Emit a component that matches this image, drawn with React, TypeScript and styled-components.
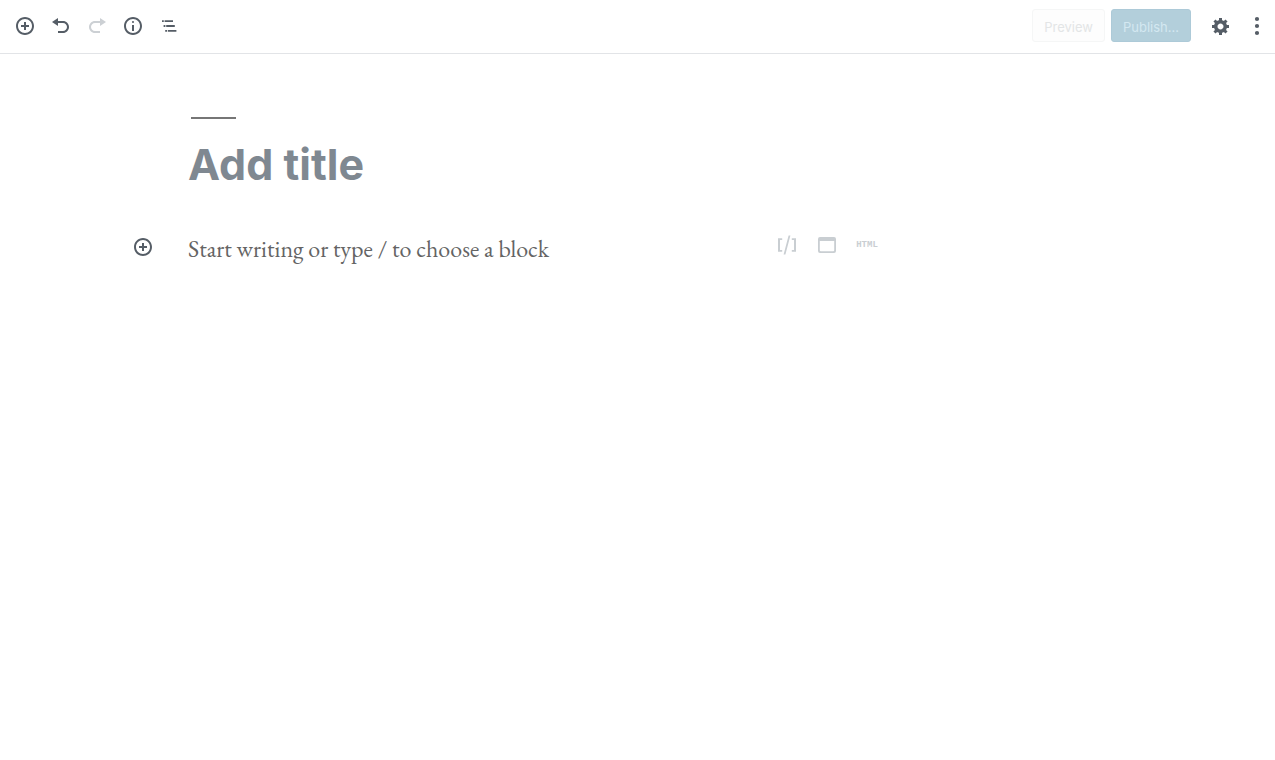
import React from 'react';
import styled, { createGlobalStyle } from 'styled-components';

const GlobalStyle = createGlobalStyle`
  *, *::before, *::after { box-sizing: border-box; }
  body { margin: 0; background: #fff; font-family: Inter, "Liberation Sans", sans-serif; }
  button, input { font: inherit; }
`;

const Toolbar = styled.header`
  display: flex;
  align-items: center;
  justify-content: space-between;
  height: 54px;
  padding: 0 0 2px 7px;
  border-bottom: 1px solid #e2e4e7;
`;

const ToolGroup = styled.div`
  display: flex;
  align-items: center;
`;

const IconButton = styled.button`
  display: flex;
  align-items: center;
  justify-content: center;
  width: 36px;
  height: 36px;
  padding: 0;
  border: 0;
  background: transparent;
  color: #555d66;
  &:disabled { color: #ccd0d4; }
`;

const ActionButton = styled.button<{ $primary?: boolean }>`
  height: 33px;
  padding: 2px 11px 0;
  margin-right: ${p => (p.$primary ? 12 : 6)}px;
  border: 1px solid ${p => (p.$primary ? '#adcad8' : '#f5f6f6')};
  border-radius: 3px;
  background: ${p => (p.$primary ? '#b3cfdb' : '#fdfdfd')};
  color: ${p => (p.$primary ? '#d3e8f1' : '#e3e5e6')};
  font-size: 13px;
  line-height: 16px;
`;

const Canvas = styled.main`
  display: grid;
  grid-template-columns: 53px minmax(0, 697px);
  padding: 63px 24px 0 135px;
`;

const TitleBlock = styled.div`
  grid-column: 2;
  &::before {
    content: '';
    display: block;
    width: 45px;
    height: 2px;
    margin-left: 3px;
    background: #767676;
  }
`;

const TitleInput = styled.input`
  display: block;
  width: 100%;
  height: 60px;
  margin-top: 15px;
  padding: 0;
  border: 0;
  outline: 0;
  background: transparent;
  color: #191e23;
  font-size: 43px;
  font-weight: 700;
  &::placeholder { color: #7f8891; opacity: 1; }
`;

const InserterButton = styled(IconButton)`
  justify-content: flex-start;
  margin-top: 35px;
  margin-left: -2px;
`;

const Paragraph = styled.div`
  display: flex;
  align-items: center;
  margin-top: 35px;
  height: 36px;
`;

const ParagraphInput = styled.input`
  flex: 1;
  min-width: 0;
  height: 36px;
  padding: 2px 0 0;
  border: 0;
  outline: 0;
  background: transparent;
  color: #111;
  font-family: "EB Garamond", "Liberation Serif", serif;
  font-size: 24px;
  &::placeholder { color: #646464; opacity: 1; }
`;

const BlockShortcuts = styled.div`
  display: flex;
  gap: 4px;
  margin-bottom: 4px;
`;

const ShortcutButton = styled(IconButton)`
  color: #c9ced2;
  font-family: "Liberation Mono", monospace;
  font-size: 9px;
  font-weight: 700;
`;

const Svg = styled.svg`
  display: block;
  width: 20px;
  height: 20px;
  fill: currentColor;
`;

const Icon = ({ d }: { d: string }) => (
  <Svg viewBox="0 0 20 20" aria-hidden="true"><path d={d} /></Svg>
);

const icons = {
  insert: 'M10 1c-5 0-9 4-9 9s4 9 9 9 9-4 9-9-4-9-9-9zm0 16c-3.9 0-7-3.1-7-7s3.1-7 7-7 7 3.1 7 7-3.1 7-7 7zm1-11H9v3H6v2h3v3h2v-3h3V9h-3V6z',
  undo: 'M12 5H7V2L1 6l6 4V7h5c2.2 0 4 1.8 4 4s-1.8 4-4 4H7v2h5c3.3 0 6-2.7 6-6s-2.7-6-6-6z',
  redo: 'M8 5h5V2l6 4-6 4V7H8c-2.2 0-4 1.8-4 4s1.8 4 4 4h5v2H8c-3.3 0-6-2.7-6-6s2.7-6 6-6z',
  info: 'M9 15h2V9H9v6zm1-10c-.5 0-1 .5-1 1s.5 1 1 1 1-.5 1-1-.5-1-1-1zm0-4c-5 0-9 4-9 9s4 9 9 9 9-4 9-9-4-9-9-9zm0 16c-3.9 0-7-3.1-7-7s3.1-7 7-7 7 3.1 7 7-3.1 7-7 7z',
  outline: 'M3 4.2h1.8V6H3zM5.6 4.2H14V6H5.6zM4.6 9.1h1.8v1.8H4.6zM7.2 9.1h8.6v1.8H7.2zM6.2 14H8v1.8H6.2zM8.8 14h8.6v1.8H8.8z',
  settings: 'M18 12h-2.18c-.17.7-.44 1.35-.81 1.93l1.54 1.54-2.1 2.1-1.54-1.54c-.58.36-1.23.63-1.91.79V19H8v-2.18c-.68-.16-1.33-.43-1.91-.79l-1.54 1.54-2.12-2.12 1.54-1.54c-.36-.58-.63-1.23-.79-1.91H1V9.03h2.17c.16-.7.44-1.35.8-1.94L2.43 5.55l2.1-2.1 1.54 1.54c.58-.37 1.24-.64 1.93-.81V2h3v2.18c.68.16 1.33.43 1.91.79l1.54-1.54 2.12 2.12-1.54 1.54c.36.59.64 1.24.8 1.94H18V12zm-8.5 1.5c1.66 0 3-1.34 3-3s-1.34-3-3-3-3 1.34-3 3 1.34 3 3 3z',
  more: 'M10 .9a2.1 2.1 0 1 1 0 4.2A2.1 2.1 0 0 1 10 .9zM10 7.9a2.1 2.1 0 1 1 0 4.2 2.1 2.1 0 0 1 0-4.2zM10 14.9a2.1 2.1 0 1 1 0 4.2 2.1 2.1 0 0 1 0-4.2z',
  shortcode: 'M1 3.3h4.2V5H3v10h2.2v1.7H1zM19 3.3h-4.2V5H17v10h-2.2v1.7H19zM11.6 .6h1.8L8.4 19.6H6.6z',
  classic: 'M3 2h14q2 0 2 2v12q0 2-2 2H3q-2 0-2-2V4q0-2 2-2zM2.8 6v9.2q0 1 1 1h12.4q1 0 1-1V6z',
};

export default function App() {
  return (
    <>
      <GlobalStyle />
      <Toolbar>
        <ToolGroup>
          <IconButton aria-label="Add block"><Icon d={icons.insert} /></IconButton>
          <IconButton aria-label="Undo"><Icon d={icons.undo} /></IconButton>
          <IconButton aria-label="Redo" disabled><Icon d={icons.redo} /></IconButton>
          <IconButton aria-label="Content structure"><Icon d={icons.info} /></IconButton>
          <IconButton aria-label="Block navigation"><Icon d={icons.outline} /></IconButton>
        </ToolGroup>
        <ToolGroup>
          <ActionButton disabled>Preview</ActionButton>
          <ActionButton $primary disabled>Publish…</ActionButton>
          <IconButton aria-label="Settings"><Icon d={icons.settings} /></IconButton>
          <IconButton aria-label="More tools"><Icon d={icons.more} /></IconButton>
        </ToolGroup>
      </Toolbar>
      <Canvas>
        <TitleBlock>
          <TitleInput aria-label="Title" placeholder="Add title" />
        </TitleBlock>
        <InserterButton aria-label="Add block"><Icon d={icons.insert} /></InserterButton>
        <Paragraph>
          <ParagraphInput aria-label="Paragraph" placeholder="Start writing or type / to choose a block" />
          <BlockShortcuts>
            <ShortcutButton aria-label="Add Shortcode"><Icon d={icons.shortcode} /></ShortcutButton>
            <ShortcutButton aria-label="Add Classic"><Icon d={icons.classic} /></ShortcutButton>
            <ShortcutButton aria-label="Add Custom HTML">HTML</ShortcutButton>
          </BlockShortcuts>
        </Paragraph>
      </Canvas>
    </>
  );
}
